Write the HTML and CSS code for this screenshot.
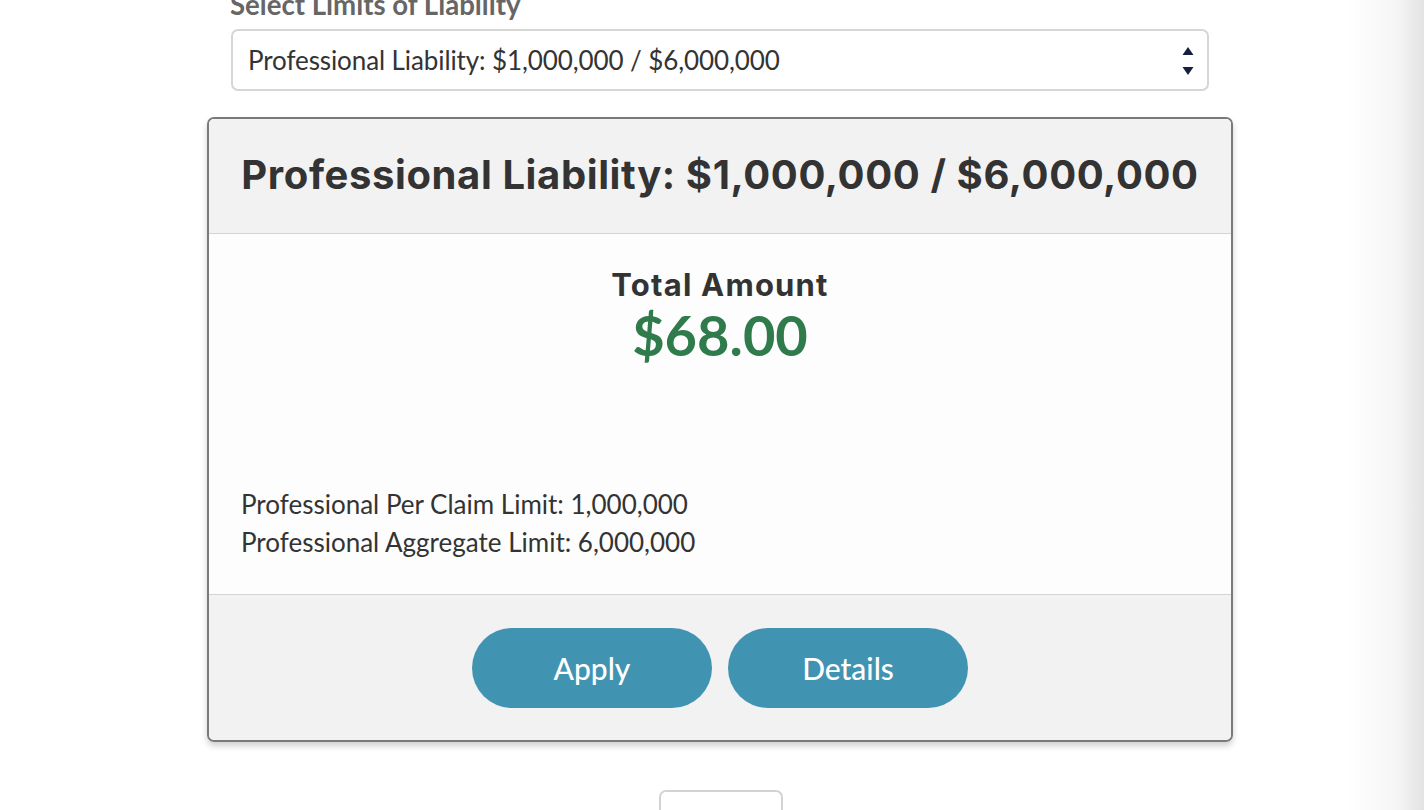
FILE: index.html
```html
<!DOCTYPE html>
<html>
<head>
<meta charset="utf-8">
<link rel="stylesheet" href="styles.css">
</head>
<body>
<div class="page">
  <div class="field">
    <label class="field-label">Select Limits of Liability</label>
    <div class="select">
      <span class="select-value">Professional Liability: $1,000,000 / $6,000,000</span>
      <svg class="select-arrows" width="12" height="30" viewBox="0 0 12 30"><path d="M6 1 L11.5 9 H0.5 Z" fill="#15203d"/><path d="M0.5 21 H11.5 L6 29 Z" fill="#15203d"/></svg>
    </div>
  </div>
  <div class="card">
    <div class="card-head">
      <h2 class="card-title">Professional Liability: $1,000,000 / $6,000,000</h2>
    </div>
    <div class="card-body">
      <div class="total">
        <div class="total-label">Total Amount</div>
        <div class="total-value">$68.00</div>
      </div>
      <div class="limits">
        <div>Professional Per Claim Limit: 1,000,000</div>
        <div>Professional Aggregate Limit: 6,000,000</div>
      </div>
    </div>
    <div class="card-foot">
      <button class="btn">Apply</button>
      <button class="btn">Details</button>
    </div>
  </div>
  <div class="next-box"></div>
</div>
</body>
</html>
```
FILE: styles.css
```css
html, body {
  margin: 0;
  padding: 0;
  height: 100%;
  overflow: hidden;
}
body {
  background: linear-gradient(to right, #ffffff 0, #ffffff 1345px, #f6f6f6 1395px, #e3e3e3 1424px);
  font-family: Lato, "Liberation Sans", sans-serif;
  color: #333;
}
.page {
  width: 1026px;
  margin-left: 207px;
  display: flex;
  flex-direction: column;
}
.field {
  display: flex;
  flex-direction: column;
  padding: 0 24px;
  margin-top: -10px;
}
.field-label {
  font-weight: 700;
  font-size: 27.6px;
  line-height: 30px;
  color: #666;
  height: 30px;
  margin-bottom: 9px;
  margin-left: -1px;
}
.select {
  height: 58px;
  border: 2px solid #d6d6d6;
  border-radius: 7px;
  background: #fff;
  display: flex;
  align-items: center;
  justify-content: space-between;
  padding: 0 13px 0 15px;
}
.select-value {
  font-size: 26px;
  color: #333;
  letter-spacing: -0.1px;
}
.select-arrows {
  display: block;
  margin-top: 1px;
}
.card {
  margin-top: 26px;
  border: 2px solid #7a7a7a;
  border-radius: 7px;
  overflow: hidden;
  box-shadow: 0 4px 6px rgba(0,0,0,0.18);
  display: flex;
  flex-direction: column;
}
.card-head {
  background: #f2f2f2;
  height: 115px;
  border-bottom: 1px solid #d3d3d3;
  display: flex;
  align-items: center;
  justify-content: center;
  padding-bottom: 3px;
  box-sizing: border-box;
}
.card-title {
  margin: 0;
  font-family: Inter, "Open Sans", sans-serif;
  font-weight: 700;
  font-size: 40px;
  color: #333;
  letter-spacing: 0.6px;
}
.card-body {
  background: #fcfdfc;
  height: 360px;
  border-bottom: 1px solid #d3d3d3;
  display: flex;
  flex-direction: column;
  padding: 0 32px;
}
.total {
  display: flex;
  flex-direction: column;
  align-items: center;
  padding-top: 33px;
}
.total-label {
  font-family: Inter, "Open Sans", sans-serif;
  font-weight: 700;
  font-size: 31px;
  line-height: 36px;
  color: #333;
  letter-spacing: 1.2px;
}
.total-value {
  font-weight: 700;
  font-size: 56px;
  line-height: 64px;
  color: #2f7b4b;
}
.limits {
  margin-top: auto;
  margin-bottom: 33px;
  font-size: 26px;
  line-height: 38px;
  color: #333;
}
.card-foot {
  background: #f2f2f2;
  height: 145px;
  display: flex;
  align-items: center;
  justify-content: center;
  gap: 16px;
}
.btn {
  width: 240px;
  height: 80px;
  border: none;
  border-radius: 40px;
  background: #4193b2;
  color: #fff;
  font-family: Lato, "Liberation Sans", sans-serif;
  font-size: 30px;
  font-weight: 500;
  cursor: pointer;
}
.next-box {
  align-self: center;
  width: 120px;
  height: 40px;
  margin-top: 48px;
  margin-left: 1px;
  border: 2px solid #d3d3d3;
  border-bottom: none;
  border-radius: 7px 7px 0 0;
  background: #fff;
}
```
